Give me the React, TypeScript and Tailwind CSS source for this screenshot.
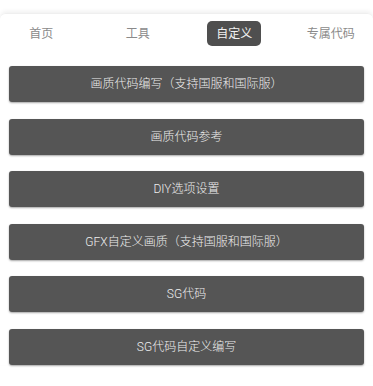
import React, { useState } from 'react';

const tabs = ['首页', '工具', '自定义', '专属代码'];

const items = [
    '画质代码编写（支持国服和国际服）',
    '画质代码参考',
    'DIY选项设置',
    'GFX自定义画质（支持国服和国际服）',
    'SG代码',
    'SG代码自定义编写',
];

export default function App() {
    const [active, setActive] = useState(2);

    return (
        <div
            className="w-[373px] h-[386px] bg-white overflow-hidden"
            style={{ fontFamily: 'Roboto, "Noto Sans CJK SC", sans-serif' }}
        >
            <div className="h-[13px] bg-white" />
            {/* tab bar */}
            <div className="rounded-t-[6px] shadow-[0_-2px_4px_rgba(0,0,0,0.06)] border-t border-[#efefef] pt-[7px]">
                <div className="grid grid-cols-4 w-[386px] -ml-[7px] h-[25px] items-center">
                    {tabs.map((t, i) => (
                        <div key={t} className="flex justify-center">
                            <button
                                onClick={() => setActive(i)}
                                className={
                                    i === active
                                        ? 'h-[25px] px-[9px] rounded-[5px] bg-[#4f4f4f] text-[#f2f2f2] text-[12px] leading-none'
                                        : 'h-[25px] text-[#8a8a8a] text-[12px] leading-none'
                                }
                            >
                                {t}
                            </button>
                        </div>
                    ))}
                </div>

                {/* menu list */}
                <div className="flex flex-col gap-[16.5px] px-[9px] pt-[20px]">
                    {items.map((label) => (
                        <button
                            key={label}
                            className="h-[36px] w-full rounded-[3px] bg-[#555555] text-[#eeeeee] text-[12px] font-light shadow-[0_1px_2px_rgba(0,0,0,0.35)] flex items-center justify-center"
                        >
                            {label}
                        </button>
                    ))}
                </div>
            </div>
        </div>
    );
}
